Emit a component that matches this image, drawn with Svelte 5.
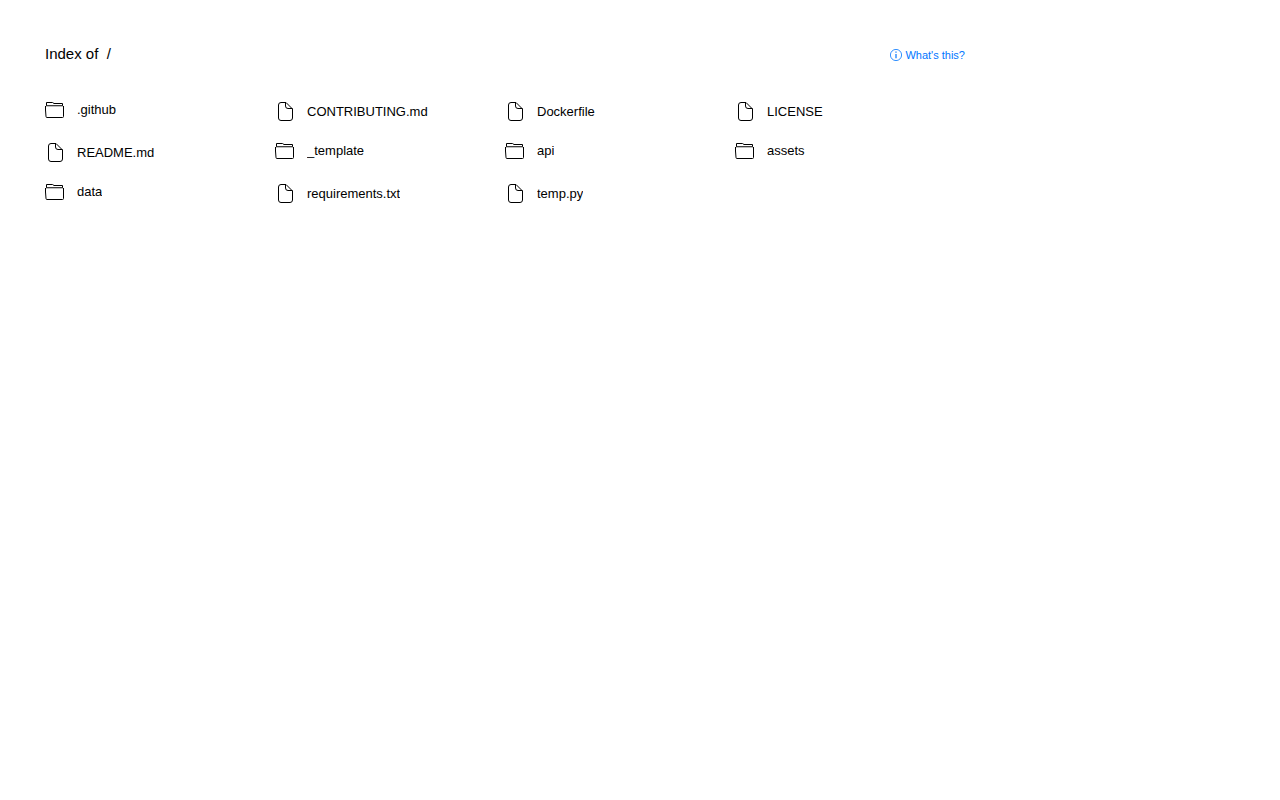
<script>
const path = '/';

const files = [
	{ name: '.github', folder: true },
	{ name: 'CONTRIBUTING.md' },
	{ name: 'Dockerfile' },
	{ name: 'LICENSE' },
	{ name: 'README.md' },
	{ name: '_template', folder: true },
	{ name: 'api', folder: true },
	{ name: 'assets', folder: true },
	{ name: 'data', folder: true },
	{ name: 'requirements.txt' },
	{ name: 'temp.py' },
];
</script>

<svelte:head>
	<title>Files within {path}</title>
</svelte:head>

<main>
	<header>
		<h1>Index of &nbsp;<a href="/">{path}</a></h1>
		<a class="about" href="#about">
			<svg width="12" height="12" viewBox="0 0 12 12" aria-hidden="true">
				<circle cx="6" cy="6" r="5.6" fill="none" stroke="currentColor" stroke-width=".8" />
				<path d="M5.4 2.6h1.2v1.2H5.4zM5.4 5h1.2v4.2H5.4z" fill="currentColor" />
			</svg>
			What's this?
		</a>
	</header>

	<ul>
		{#each files as file}
			<li>
				<a href={'/' + file.name}>
					{#if file.folder}
						<svg class="folder" width="20" height="17" viewBox="0 0 20 17" aria-hidden="true">
							<path d="M1.5 4.5V1.5H7.5L9 2.5H17.5V4.5" />
							<path d="M1 4.5H18" opacity=".75" />
							<path d="M1 5.5H18" opacity=".25" />
							<path d="M.5 5V9L1 15.5Q1 16.5 2 16.5H17.5Q18.5 16.5 18.5 15.5V5" />
						</svg>
					{:else}
						<svg class="file" width="20" height="21" viewBox="0 0 20 21" aria-hidden="true">
							<path d="M11 1.5H6Q3.5 1.5 3.5 4V17Q3.5 19.5 6 19.5H15Q17.5 19.5 17.5 17V8Z" />
							<path d="M10.5 1.5V5Q10.5 7.5 13 7.5H17.5" />
						</svg>
					{/if}
					<span>{file.name}</span>
				</a>
			</li>
		{/each}
	</ul>
</main>

<style>
	:global(body) {
		margin: 0;
		background: #fff;
		color: #000;
		font-family: "Liberation Sans", Arial, sans-serif;
	}

	main {
		box-sizing: border-box;
		max-width: 1010px;
		padding: 45px;
	}

	header {
		display: flex;
		justify-content: space-between;
		align-items: center;
		margin-bottom: 28px;
	}

	h1 {
		margin: 0;
		font-size: 15px;
		font-weight: 400;
		line-height: 18px;
	}

	a {
		color: inherit;
		text-decoration: none;
	}

	.about {
		display: flex;
		align-items: center;
		gap: 3px;
		padding-top: 2px;
		color: #0076ff;
		font-size: 11px;
		line-height: 16px;
	}

	ul {
		display: grid;
		grid-template-columns: repeat(auto-fill, minmax(230px, 1fr));
		margin: 0;
		padding: 0;
		list-style: none;
	}

	li a {
		display: flex;
		align-items: center;
		gap: 12px;
		padding: 10px 0;
		font-size: 13px;
		line-height: 17px;
	}

	li svg {
		flex: none;
		fill: none;
		stroke: #000;
	}

	li span {
		overflow: hidden;
		text-overflow: ellipsis;
		white-space: nowrap;
	}
</style>
